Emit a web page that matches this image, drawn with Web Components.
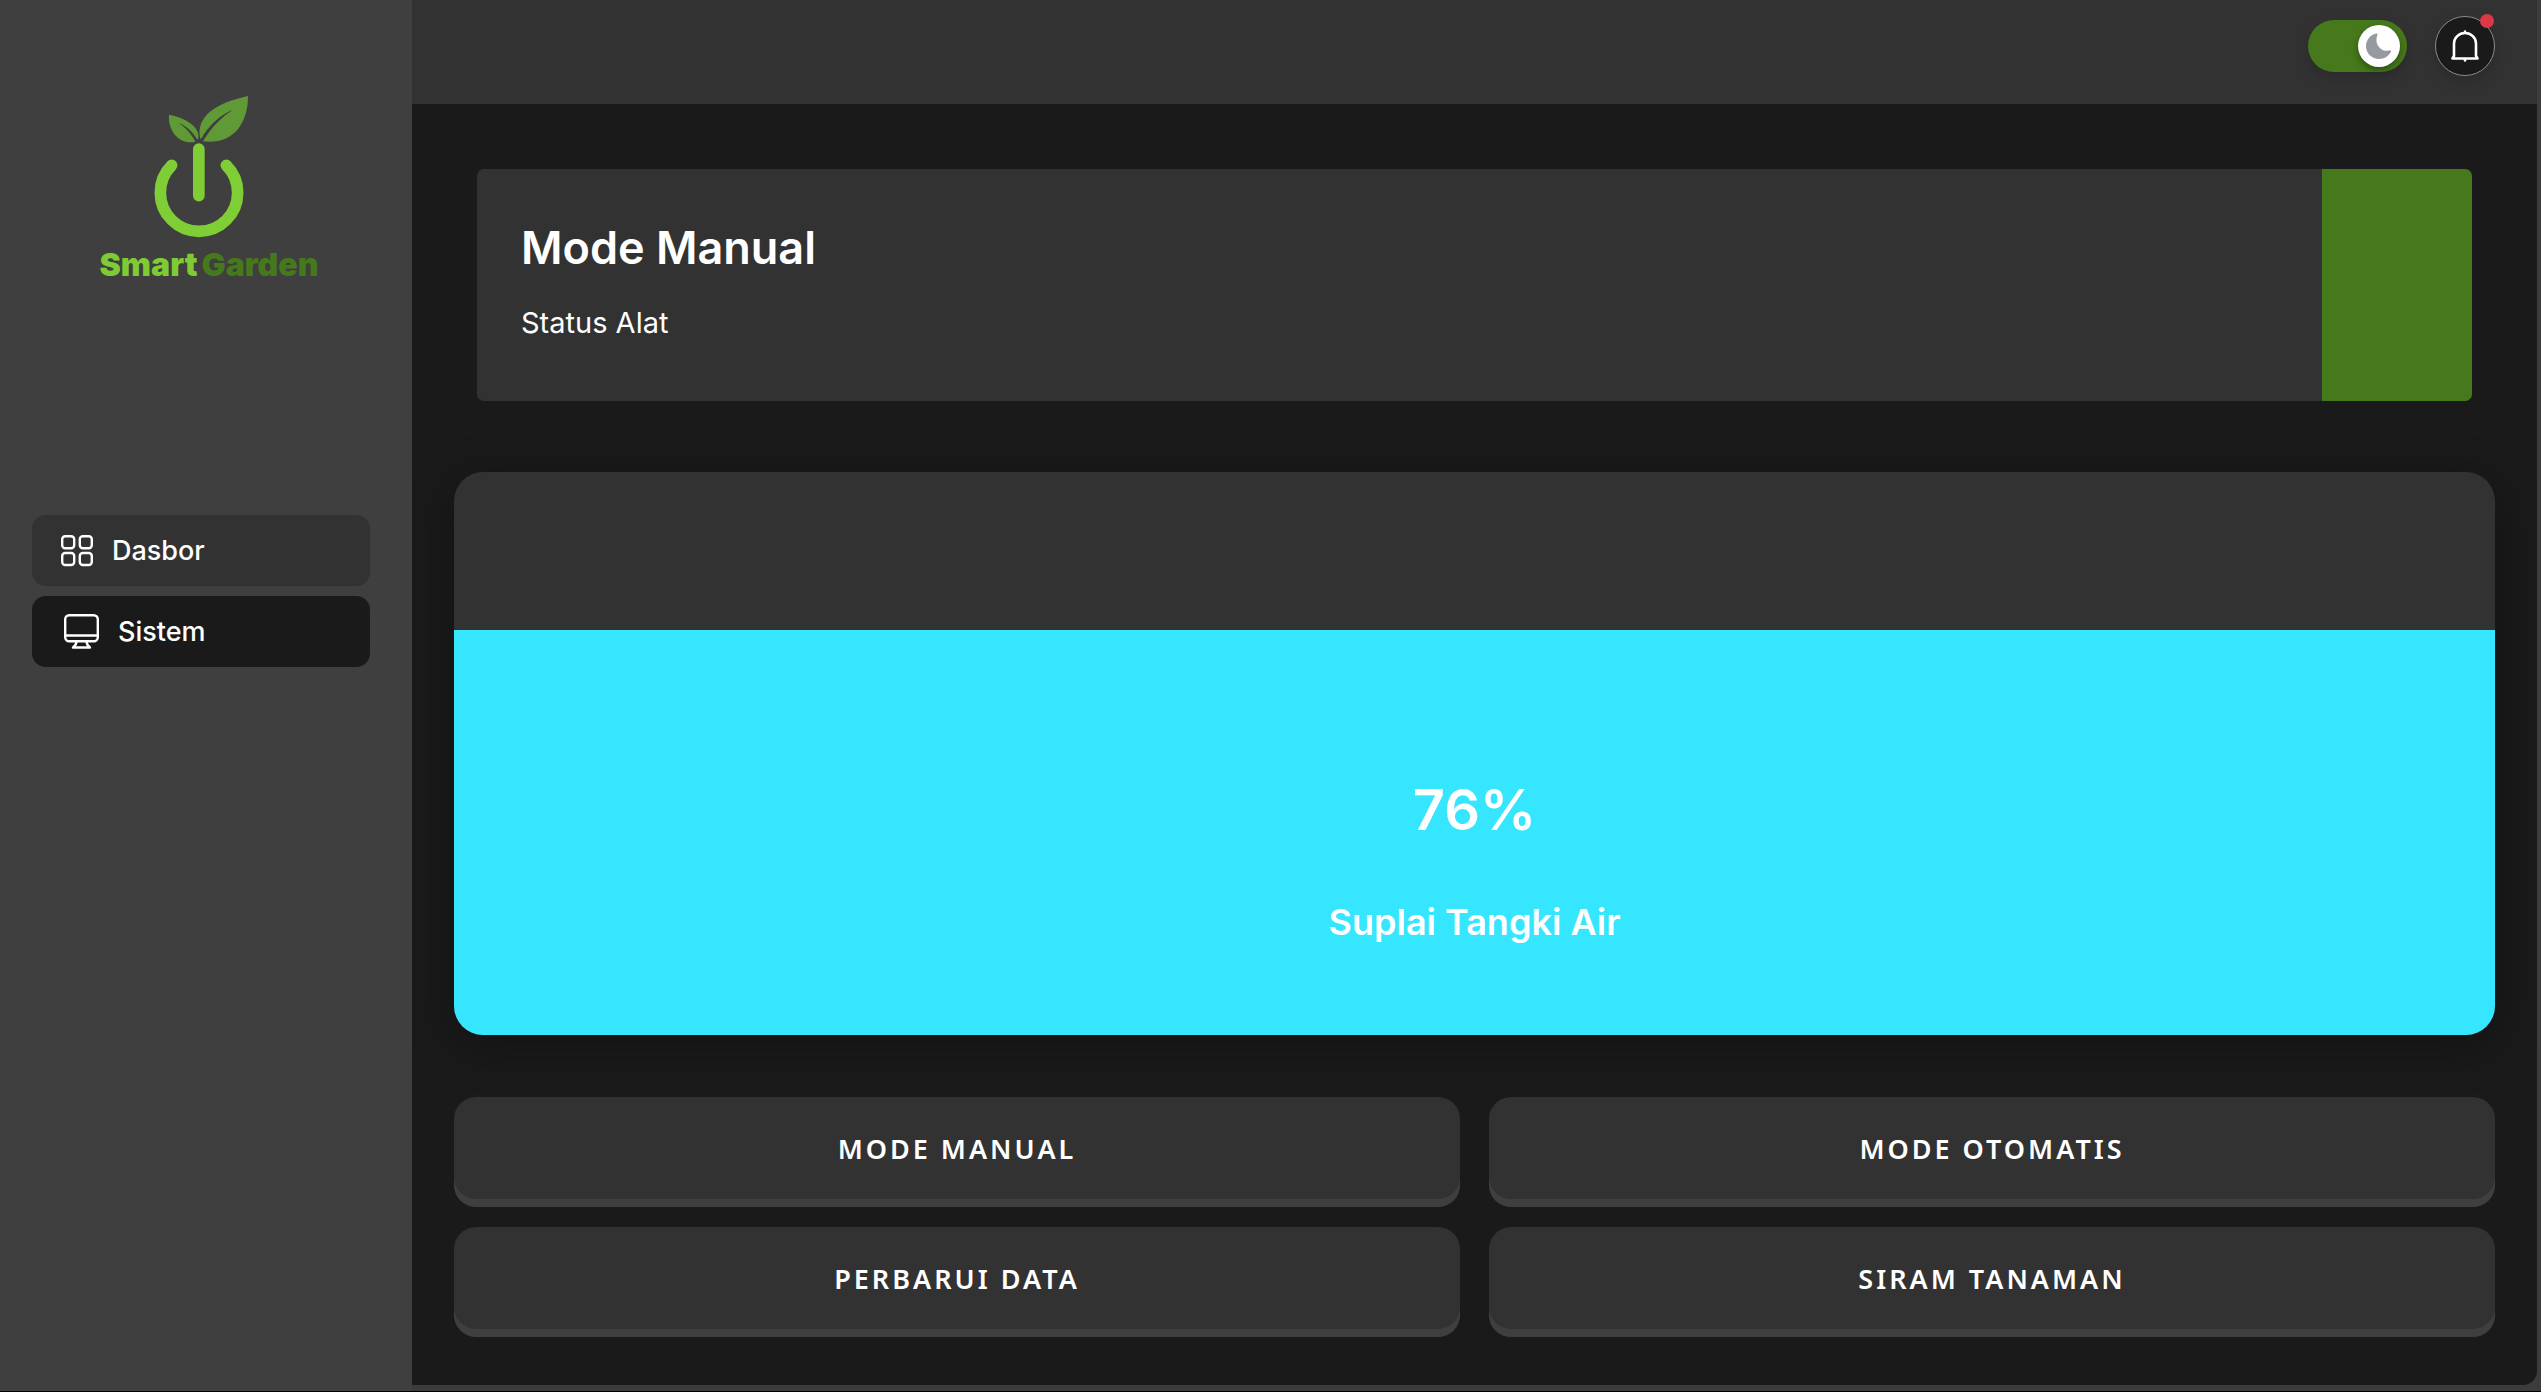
<!DOCTYPE html>
<html lang="id">
<head>
<meta charset="utf-8">
<meta name="viewport" content="width=device-width, initial-scale=1">
<title>Smart Garden</title>
<style>
  :root {
    --bg: #1a1a1a;
    --panel: #323232;
    --side: #3f3f3f;
    --green: #46791b;
    --water: #36e6ff;
  }
  body {
    margin: 0;
    background: #3c3c3c;
    color: #fff;
    font-family: Inter, "Liberation Sans", sans-serif;
  }
</style>
</head>
<body>
<garden-app>
  <garden-sidebar slot="sidebar">
    <garden-logo slot="logo"></garden-logo>
    <nav-link href="#dasbor" icon="grid">Dasbor</nav-link>
    <nav-link href="#sistem" icon="screen" active>Sistem</nav-link>
  </garden-sidebar>
  <garden-header slot="header">
    <theme-toggle></theme-toggle>
    <bell-button></bell-button>
  </garden-header>
  <status-card><span slot="title">Mode Manual</span>Status Alat</status-card>
  <water-tank><span slot="value">76%</span>Suplai Tangki Air</water-tank>
  <action-grid>
    <action-button>MODE MANUAL</action-button>
    <action-button>MODE OTOMATIS</action-button>
    <action-button>PERBARUI DATA</action-button>
    <action-button>SIRAM TANAMAN</action-button>
  </action-grid>
</garden-app>

<script>
const define = (name, html) => customElements.define(name, class extends HTMLElement {
  connectedCallback() {
    if (this.shadowRoot) return;
    const markup = typeof html === 'function' ? html(this) : html;
    this.attachShadow({ mode: 'open' }).innerHTML = markup;
  }
});

define('garden-app', `
  <style>
    :host { display: flex; box-sizing: border-box; min-height: 100vh; border-bottom: 1px solid #000; }
    .page { flex: 1; min-width: 0; display: flex; flex-direction: column; margin: 0 4px 6px 0;
            background: var(--bg); border-bottom-right-radius: 14px; overflow: hidden; }
    main { flex: 1; display: flex; flex-direction: column; padding: 65px 42px 48px; }
  </style>
  <slot name="sidebar"></slot>
  <div class="page">
    <slot name="header"></slot>
    <main><slot></slot></main>
  </div>`);

define('garden-sidebar', `
  <style>
    :host { display: flex; flex-direction: column; box-sizing: border-box; flex: none; width: 412px;
            padding: 95px 42px 32px 32px; background: var(--side); }
    nav { display: flex; flex-direction: column; gap: 10px; margin-top: 230px; }
  </style>
  <slot name="logo"></slot>
  <nav aria-label="Menu utama"><slot></slot></nav>`);

define('garden-logo', `
  <style>
    :host { display: block; }
    a { display: flex; flex-direction: column; align-items: center; text-decoration: none; }
    svg { display: block; width: 96px; height: 143px; }
    .name { display: flex; gap: 4px; margin-top: 7px; padding-left: 16px;
            font-size: 32px; line-height: 40px; font-weight: 900; color: #7ecb34; }
    .name b { font-weight: 900; color: var(--green); }
  </style>
  <a href="#beranda">
    <svg viewBox="220 48 288 429" aria-hidden="true">
      <g fill="#5f9a36">
        <path d="M505 51C410 72 350 110 361 176L364 180C384 143 420 107 460 92C425 114 394 146 370 187C450 198 505 145 505 51Z"/>
        <path d="M268 107C328 118 362 150 356 178L353 182C340 160 322 142 297 132C318 146 333 162 347 188C305 198 264 162 268 107Z"/>
      </g>
      <g fill="none" stroke="#7fce36" stroke-width="35" stroke-linecap="round">
        <path d="M357.500 210V350"/>
        <path d="M276 259A116 116 0 1 0 440 259"/>
      </g>
    </svg>
    <span class="name"><span>Smart</span><b>Garden</b></span>
  </a>`);

const icons = {
  grid: `<svg width="32" height="32" viewBox="0 0 32 32" fill="none" stroke="#fff" stroke-width="2.400">
    <rect x="1.200" y="1.200" width="12" height="12" rx="3"/><rect x="18.800" y="1.200" width="12" height="12" rx="3"/>
    <rect x="1.200" y="18" width="12" height="12" rx="3"/><rect x="18.800" y="18" width="12" height="12" rx="3"/></svg>`,
  screen: `<svg width="35" height="35" viewBox="0 0 35 35" fill="none" stroke="#fff" stroke-width="2.400" stroke-linejoin="round">
    <rect x="1.200" y="1.200" width="32.600" height="26" rx="4"/><path d="M1 21.500H34"/>
    <path d="M12.500 27Q12.500 31 9 33.500H26Q22.500 31 22.500 27"/></svg>`
};

define('nav-link', el => `
  <style>
    :host { display: block; }
    a { display: flex; align-items: center; gap: 19px; height: 71px; padding-left: 29px; border-radius: 14px;
        background: var(--panel); color: #fff; text-decoration: none; font-size: 27px; line-height: 36px; font-weight: 500; }
    :host([active]) a { background: var(--bg); padding-left: 32px; }
    svg { display: block; flex: none; }
  </style>
  <a href="${el.getAttribute('href')}"${el.hasAttribute('active') ? ' aria-current="page"' : ''}>${icons[el.getAttribute('icon')]}<slot></slot></a>`);

define('garden-header', `
  <style>
    :host { display: flex; justify-content: flex-end; align-items: center; gap: 28px;
            padding: 16px 42px 28px; background: var(--panel); }
  </style>
  <slot></slot>`);

define('theme-toggle', `
  <style>
    :host { display: block; }
    label { display: flex; justify-content: flex-end; align-items: center; box-sizing: border-box; position: relative;
            width: 99px; height: 52px; padding: 0 7px; border-radius: 26px;
            background: var(--green); box-shadow: 0 6px 14px rgba(0,0,0,.15); cursor: pointer; }
    input { position: absolute; inset: 0; width: 100%; height: 100%; margin: 0; opacity: 0; cursor: pointer; }
    .knob { display: flex; align-items: center; justify-content: center; width: 42px; height: 42px;
            border-radius: 50%; background: #fff; box-shadow: 0 3px 7px rgba(0,0,0,.35); }
  </style>
  <label>
    <input type="checkbox" role="switch" checked aria-label="Mode gelap">
    <span class="knob"><svg width="26" height="26" viewBox="0 0 26 26" aria-hidden="true">
      <path fill="#959aa1" d="M10 .5C11.500 .2 11.800 1 11.300 2.200C9.200 8 11 13 15.500 16.200C18 18 20.500 18.200 23 17.500C24.700 17 25.500 18 24.700 19.300C22.300 23.500 18 26 13 26C6 26 0 20.500 0 13.300C0 7.200 4 2 10 .5Z"/>
    </svg></span>
  </label>`);

define('bell-button', `
  <style>
    :host { display: block; position: relative; }
    button { display: flex; align-items: center; justify-content: center; box-sizing: border-box; width: 60px; height: 60px;
             padding: 0; border: 1px solid #8a8a8a; border-radius: 50%; background: var(--bg);
             box-shadow: 0 6px 14px rgba(0,0,0,.15); cursor: pointer; }
    .dot { position: absolute; top: -2px; right: 1px; width: 14px; height: 14px; border-radius: 50%; background: #dc3848; }
  </style>
  <button type="button" aria-label="Notifikasi">
    <svg width="28" height="32" viewBox="0 0 28 32" fill="none" stroke="#fff" stroke-width="2.600" stroke-linecap="round" stroke-linejoin="round" aria-hidden="true">
      <path d="M14 1.500V3M14 29V30.500M3 26V13.500A11 10.500 0 0 1 25 13.500V26L26.500 28.500H1.500Z"/>
    </svg>
  </button>
  <span class="dot"></span>`);

define('status-card', `
  <style>
    :host { display: flex; margin: 0 23px; min-height: 232px; border-radius: 7px; overflow: hidden; background: var(--panel); }
    .text { flex: 1; padding: 49px 44px 44px; }
    h1 { margin: 0; font-size: 45px; line-height: 60px; font-weight: 600; }
    p { margin: 25px 0 0; font-size: 29px; line-height: 40px; }
    .state { width: 150px; background: var(--green); }
  </style>
  <div class="text"><h1><slot name="title"></slot></h1><p><slot></slot></p></div>
  <div class="state"></div>`);

define('water-tank', `
  <style>
    :host { display: flex; flex-direction: column; justify-content: flex-end; flex: 1; min-height: 480px; margin-top: 71px;
            border-radius: 29px; overflow: hidden; background: var(--panel); box-shadow: 0 10px 48px rgba(0,0,0,.3); }
    .water { display: flex; flex-direction: column; align-items: center; justify-content: flex-end; box-sizing: border-box;
             height: 72%; padding-bottom: 89px; gap: 52px; background: var(--water); font-weight: 600; }
    .value { font-size: 56px; line-height: 72px; }
    .label { font-size: 36px; line-height: 48px; }
  </style>
  <div class="water">
    <div class="value"><slot name="value"></slot></div>
    <div class="label"><slot></slot></div>
  </div>`);

define('action-grid', `
  <style>
    :host { display: grid; grid-template-columns: 1fr 1fr; gap: 20px 29px; margin-top: 62px; }
  </style>
  <slot></slot>`);

define('action-button', `
  <style>
    :host { display: block; }
    button { display: block; box-sizing: border-box; width: 100%; height: 110px; padding: 0 0 6px; border: 0; border-radius: 22px;
             background: var(--panel); box-shadow: inset 0 -8px 0 var(--side); color: #fff; cursor: pointer;
             font: 600 27px/36px "Noto Sans", "Open Sans", sans-serif; letter-spacing: 3px; }
  </style>
  <button type="button"><slot></slot></button>`);
</script>
</body>
</html>
